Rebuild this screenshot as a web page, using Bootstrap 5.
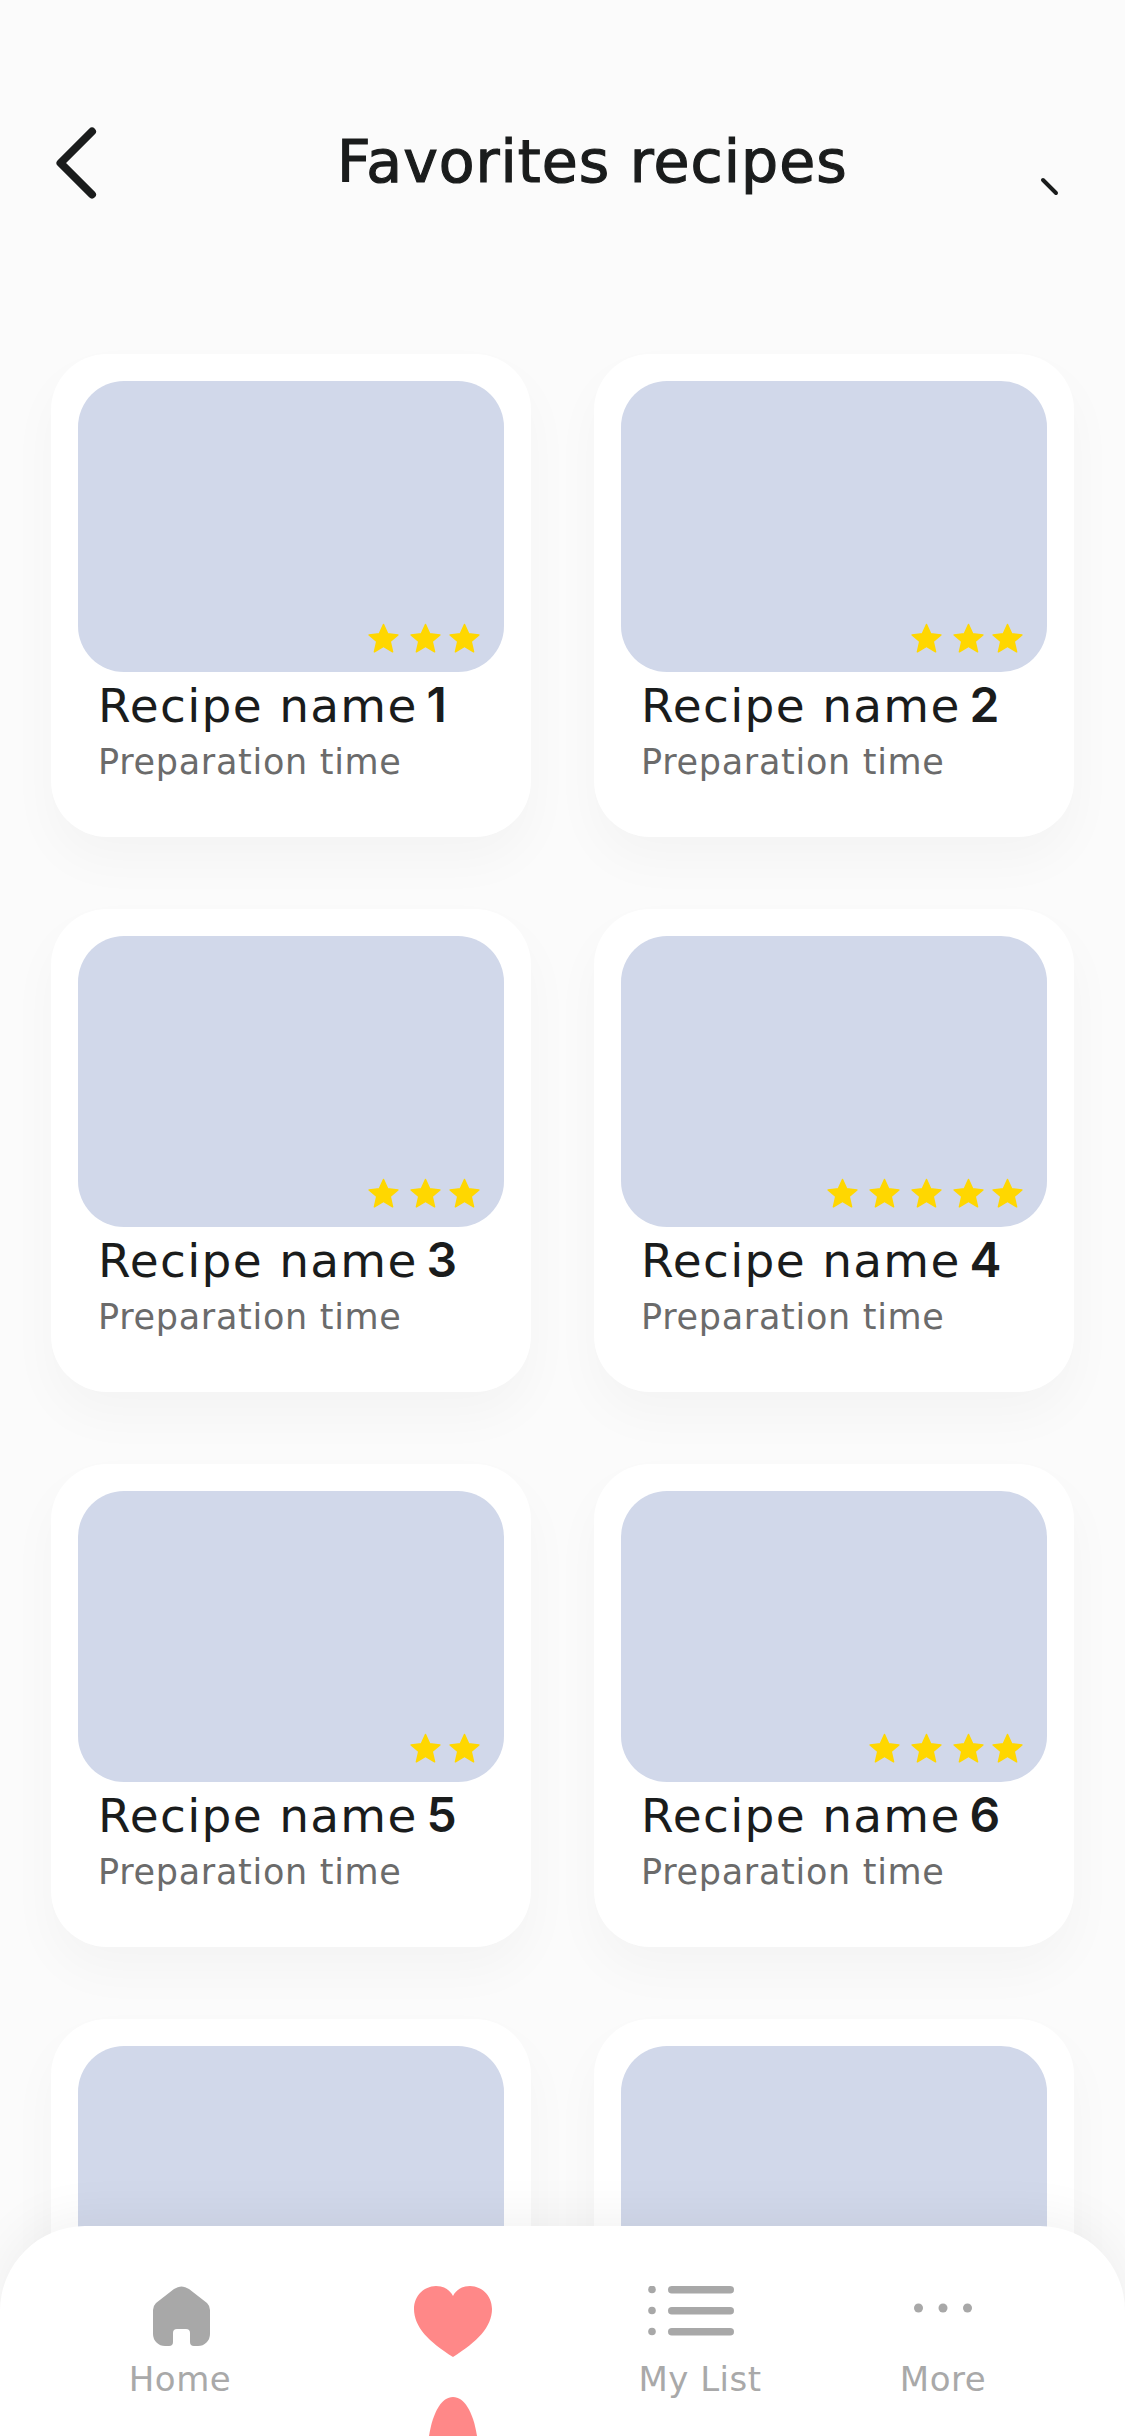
<!DOCTYPE html>
<html lang="en">
<head>
    <meta charset="UTF-8">
    <meta name="viewport" content="width=device-width, initial-scale=1.0">
    <title>Favorites recipes</title>
    <link href="https://cdn.jsdelivr.net/npm/bootstrap@5.3.0/dist/css/bootstrap.min.css" rel="stylesheet">
    <style>
        body {
            height: 2436px;
            overflow: hidden;
            background-color: #fbfbfb;
            font-family: "DejaVu Sans", "Liberation Sans", sans-serif;
            color: #1a1c1c;
        }
        .screen {
            position: relative;
            height: 2436px;
            overflow: hidden;
        }
        .top-bar {
            height: 354px;
            padding: 127px 66px 0 56px;
        }
        .back-icon { width: 41px; height: 72px; }
        .tick-icon { width: 19px; height: 19px; margin-top: 50px; }
        .page-title {
            font-size: 58.5px;
            font-weight: 400;
            line-height: 70px;
            letter-spacing: 1px;
            -webkit-text-stroke: 1.2px #1a1c1c;
            margin: 0 0 0 240px;
            flex-grow: 1;
        }
        .recipe-grid {
            display: grid;
            grid-template-columns: 480px 480px;
            column-gap: 63px;
            row-gap: 72px;
            padding-left: 51px;
        }
        .recipe-card {
            height: 483px;
            padding: 27px;
            background-color: #fff;
            border: 0;
            border-radius: 56px;
            box-shadow: 0 24px 50px rgba(0,0,0,0.03);
        }
        .recipe-photo {
            height: 291px;
            padding: 0 24px 18px 0;
            background-color: #d1d8ea;
            border-radius: 46px;
        }
        .star-icon { width: 31px; height: 31px; margin-left: 11px; }
        .star-icon:last-child { margin-left: 8px; }
        .recipe-name {
            font-size: 47px;
            line-height: 58px;
            letter-spacing: 1.3px;
            margin: 4px 0 0 20px;
        }
        .recipe-name b {
            font-family: Inter, sans-serif;
            font-weight: 600;
            font-size: 48px;
            word-spacing: -4.5px;
        }
        .recipe-time {
            font-size: 35px;
            line-height: 42px;
            letter-spacing: 0.7px;
            color: #6b6b6b;
            margin: 6px 0 0 20px;
        }
        .tab-bar {
            position: absolute;
            left: 0;
            right: 0;
            bottom: 0;
            height: 210px;
            padding-top: 60px;
            display: grid;
            grid-template-columns: 360px 186px 308px 178px;
            background-color: #fff;
            border-radius: 85px 85px 0 0;
            box-shadow: 0 -10px 50px rgba(0,0,0,0.05);
        }
        .tab-label {
            color: #a9a9a9;
            font-size: 34px;
            line-height: 42px;
            letter-spacing: 0.5px;
            margin-top: 12px;
        }
        .tab-home-icon { margin-left: 3px; }
        .tab-list-icon { margin-right: 18px; }
        .tab-drop { margin-top: 40px; }
    </style>
</head>
<body>
    <div class="screen">
        <!-- Header -->
        <div class="top-bar d-flex align-items-start">
            <svg class="back-icon flex-shrink-0" viewBox="0 0 41 72"><path d="M36 4.500 4.500 36 36 67.500" fill="none" stroke="#1a1c1c" stroke-width="8" stroke-linecap="round" stroke-linejoin="round"/></svg>
            <h1 class="page-title">Favorites recipes</h1>
            <svg class="tick-icon flex-shrink-0" viewBox="0 0 19 19"><path d="M3 3l13 13" stroke="#1a1c1c" stroke-width="4" stroke-linecap="round"/></svg>
        </div>

        <!-- Recipes -->
        <div class="recipe-grid" id="recipeGrid"></div>

        <!-- Tab bar -->
        <div class="tab-bar">
            <div class="d-flex flex-column align-items-center">
                <svg class="tab-home-icon" width="57" height="60" viewBox="0 0 57 60"><path d="M21 3Q28.500-2 36 3L54 17Q57 20 57 24V48A12 12 0 0 1 45 60H41A4 4 0 0 1 37 56V47A4 4 0 0 0 33 43H24A4 4 0 0 0 20 47V56A4 4 0 0 1 16 60H12A12 12 0 0 1 0 48V24Q0 20 3 17Z" fill="#a8a8a8"/></svg>
                <span class="tab-label">Home</span>
            </div>
            <div class="d-flex flex-column align-items-center">
                <svg width="78" height="71" viewBox="0 0 78 71"><path d="M39 71C15 56 0 41 0 23 0 9 11 0 22 0 30 0 36 4 39 10 42 4 48 0 56 0 67 0 78 9 78 23 78 41 63 56 39 71Z" fill="#ff8888"/></svg>
                <svg class="tab-drop" width="48" height="39" viewBox="0 0 48 39"><path d="M0 39C4 14 13 0 24 0S44 14 48 39Z" fill="#ff8888"/></svg>
            </div>
            <div class="d-flex flex-column align-items-center">
                <svg class="tab-list-icon" width="86" height="60" viewBox="0 0 86 60"><g fill="#a8a8a8"><circle cx="4" cy="3.500" r="3.800"/><circle cx="4" cy="24.500" r="3.800"/><circle cx="4" cy="45.500" r="3.800"/><rect x="20" y="0" width="66" height="7.500" rx="3.750"/><rect x="20" y="21" width="66" height="7.500" rx="3.750"/><rect x="20" y="42" width="66" height="7.500" rx="3.750"/></g></svg>
                <span class="tab-label">My List</span>
            </div>
            <div class="d-flex flex-column align-items-center">
                <svg width="58" height="60" viewBox="0 0 58 60"><g fill="#a8a8a8"><circle cx="4.500" cy="22" r="4.500"/><circle cx="29" cy="22" r="4.500"/><circle cx="53.500" cy="22" r="4.500"/></g></svg>
                <span class="tab-label">More</span>
            </div>
        </div>
    </div>

    <script src="https://cdn.jsdelivr.net/npm/bootstrap@5.3.0/dist/js/bootstrap.bundle.min.js"></script>
    <script>
        const stars = [3, 3, 3, 5, 2, 4, 0, 0];
        const starSvg = '<svg class="star-icon" viewBox="0 0 31 31"><path d="M15.500 1.500l4.200 9.300 10.200 1.100-7.700 6.600 2.400 10.300-9.100-5.400-9.100 5.400 2.400-10.300L1.100 11.900l10.200-1.100z" fill="#ffd700" stroke="#ffd700" stroke-width="1.500" stroke-linejoin="round"/></svg>';

        // Build recipe cards, the last row only shows its photos above the tab bar
        document.getElementById('recipeGrid').innerHTML = stars.map((count, index) => `
            <div class="card recipe-card">
                <div class="recipe-photo d-flex align-items-end justify-content-end">${starSvg.repeat(count)}</div>
                ${index < 6 ? `<div class="recipe-name">Recipe name<b> ${index + 1}</b></div>
                <div class="recipe-time">Preparation time</div>` : ''}
            </div>
        `).join('');
    </script>
</body>
</html>
